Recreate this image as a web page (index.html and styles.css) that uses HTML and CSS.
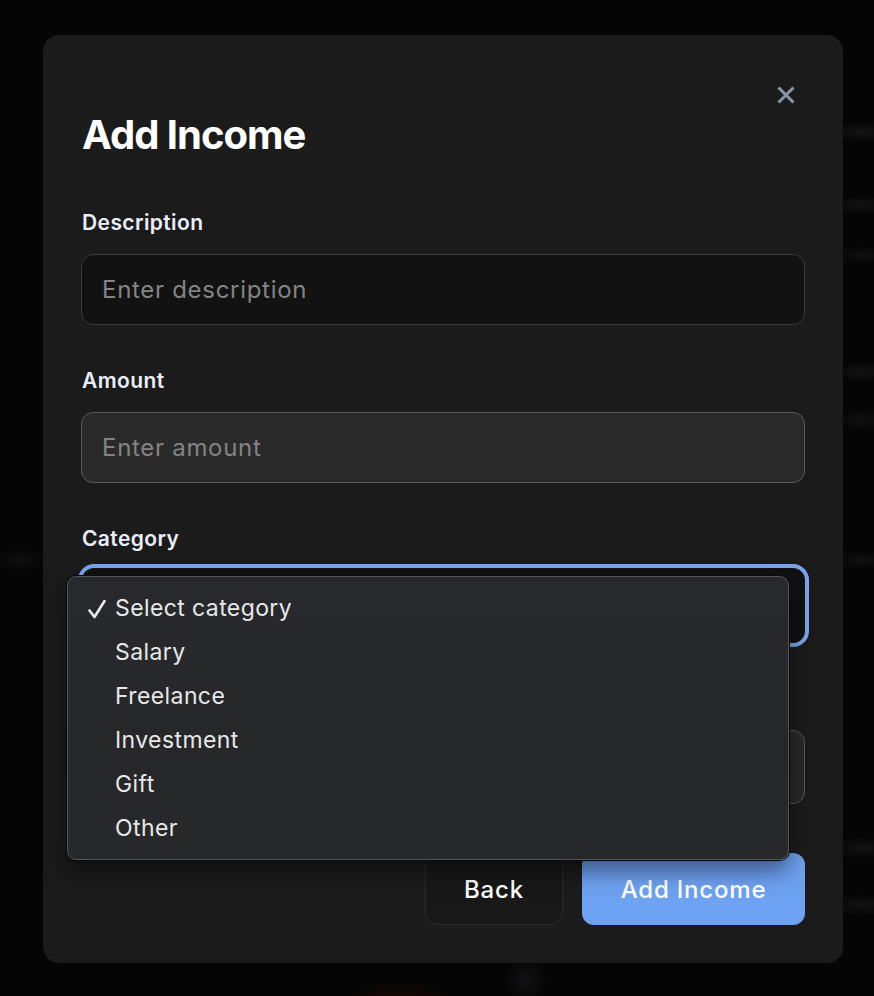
FILE: index.html
```html
<!DOCTYPE html>
<html lang="en">
<head>
<meta charset="utf-8">
<title>Add Income</title>
<link rel="stylesheet" href="styles.css">
</head>
<body>
<div class="modal">
  <div class="modal-top">
    <button class="close-btn" aria-label="Close">
      <svg width="20" height="20" viewBox="0 0 20 20"><path d="M2.5 2.5 L17.5 17.5 M17.5 2.5 L2.5 17.5" stroke="#8b95a7" stroke-width="3" stroke-linecap="butt" fill="none"/></svg>
    </button>
  </div>
  <h1 class="title">Add Income</h1>
  <form class="form">
    <div class="field">
      <label class="label">Description</label>
      <div class="input input-dark"><span class="placeholder">Enter description</span></div>
    </div>
    <div class="field">
      <label class="label">Amount</label>
      <div class="input input-grey"><span class="placeholder">Enter amount</span></div>
    </div>
    <div class="field field-cat">
      <label class="label">Category</label>
      <div class="select-wrap">
        <div class="select">
          <svg class="chev" width="14" height="14" viewBox="0 0 14 14"><path d="M2 5 L7 10 L12 5" stroke="#3a4a6a" stroke-width="1.5" fill="none"/></svg>
        </div>
        <div class="menu">
          <div class="menu-item"><span class="check"><svg width="18" height="20" viewBox="0 0 18 20"><path d="M1.5 11.5 L6.5 18 L16.5 2" stroke="#e8e8e8" stroke-width="2.6" stroke-linecap="round" stroke-linejoin="round" fill="none"/></svg></span>Select category</div>
          <div class="menu-item"><span class="check"></span>Salary</div>
          <div class="menu-item"><span class="check"></span>Freelance</div>
          <div class="menu-item"><span class="check"></span>Investment</div>
          <div class="menu-item"><span class="check"></span>Gift</div>
          <div class="menu-item"><span class="check"></span>Other</div>
        </div>
      </div>
    </div>
    <div class="field field-date">
      <div class="label label-empty"></div>
      <div class="input input-grey input-date"></div>
    </div>
    <div class="actions">
      <button type="button" class="btn btn-back">Back</button>
      <button type="button" class="btn btn-primary">Add Income</button>
    </div>
  </form>
</div>
</body>
</html>
```
FILE: styles.css
```css
* { box-sizing: border-box; }
html, body { margin: 0; padding: 0; }
body {
  width: 874px;
  height: 996px;
  overflow: hidden;
  font-family: Inter, "Noto Sans", sans-serif;
  background:
    radial-gradient(ellipse 34px 10px at 862px 132px, rgba(55,55,55,0.3), transparent),
    radial-gradient(ellipse 34px 10px at 862px 205px, rgba(55,55,55,0.25), transparent),
    radial-gradient(ellipse 34px 10px at 862px 255px, rgba(55,55,55,0.2), transparent),
    radial-gradient(ellipse 34px 10px at 862px 372px, rgba(55,55,55,0.25), transparent),
    radial-gradient(ellipse 34px 10px at 862px 420px, rgba(55,55,55,0.2), transparent),
    radial-gradient(ellipse 34px 10px at 862px 560px, rgba(55,55,55,0.2), transparent),
    radial-gradient(ellipse 34px 12px at 862px 848px, rgba(55,55,55,0.25), transparent),
    radial-gradient(ellipse 34px 12px at 862px 905px, rgba(55,55,55,0.25), transparent),
    radial-gradient(ellipse 34px 12px at 18px 560px, rgba(55,55,55,0.18), transparent),
    radial-gradient(ellipse 50px 14px at 400px 996px, rgba(70,8,8,0.3), transparent),
    radial-gradient(ellipse 22px 22px at 526px 980px, rgba(40,42,48,0.35), transparent),
    #050505;
}

.modal {
  width: 800px;
  height: 928px;
  margin: 35px 0 0 43px;
  background: #1b1b1b;
  border-radius: 16px;
  padding: 40px 38px 38px 38px;
  display: flex;
  flex-direction: column;
}

.modal-top {
  height: 36px;
  display: flex;
  justify-content: flex-end;
  align-items: center;
}
.close-btn {
  width: 36px;
  height: 36px;
  margin-right: 1px;
  margin-top: 4px;
  padding: 0;
  border: 0;
  background: transparent;
  display: flex;
  align-items: center;
  justify-content: center;
}

.title {
  margin: 0;
  padding-left: 1px;
  font-size: 40px;
  line-height: 48px;
  font-weight: 700;
  color: #ffffff;
  letter-spacing: -1px;
}

.form {
  margin-top: 50px;
  display: flex;
  flex-direction: column;
}

.field { display: flex; flex-direction: column; }
.field + .field { margin-top: 42px; }
.field-date { margin-top: 41px !important; }

.label {
  padding-left: 1px;
  font-size: 21px;
  line-height: 28px;
  font-weight: 600;
  color: #e9eef8;
  margin-bottom: 17px;
  letter-spacing: 0.4px;
}
.label-empty { height: 28px; }
.field-cat .label { margin-bottom: 15px; }
.field-date .label { margin-bottom: 18px; }

.input {
  height: 71px;
  border-radius: 12px;
  padding: 0 20px;
  display: flex;
  align-items: center;
}
.input-dark {
  background: #121212;
  border: 1px solid #3b3b3b;
}
.input-grey {
  background: #2a2a2a;
  border: 1px solid #5a5a5a;
}
.input-date { height: 74px; }

.placeholder {
  font-size: 24px;
  color: #848484;
  letter-spacing: 0.7px;
}

.select-wrap { position: relative; }
.select {
  height: 75px;
  margin-left: 1px;
  border-radius: 12px;
  background: #111111;
  border: 1px solid #111;
  outline: 4px solid #79a6ec;
  outline-offset: 0;
  padding: 0 20px;
  display: flex;
  align-items: center;
  justify-content: flex-end;
}
.chev { margin-right: -6px; }

.menu {
  position: absolute;
  left: -14px;
  top: 8px;
  width: 722px;
  padding: 9px 0 9px;
  border-radius: 9px;
  background: linear-gradient(180deg, #27292c 0%, #262729 60%, #27282a 100%);
  border: 1px solid #535457;
  box-shadow: 0 0 0 1px #0a0a0a, 0 10px 24px rgba(0,0,0,0.5);
  z-index: 5;
}
.menu-item {
  height: 44px;
  display: flex;
  align-items: center;
  font-size: 23px;
  color: #e8e8e8;
  padding-left: 20px;
  letter-spacing: 0.4px;
}
.check {
  width: 27px;
  height: 20px;
  display: inline-flex;
  align-items: center;
  margin-top: 2px;
}

.actions {
  margin-top: 49px;
  display: flex;
  justify-content: flex-end;
  gap: 19px;
}
.btn {
  height: 72px;
  border-radius: 12px;
  padding: 0;
  font-family: Inter, "Noto Sans", sans-serif;
  font-size: 24px;
  font-weight: 500;
  letter-spacing: 0.8px;
  color: #ffffff;
}
.btn-back {
  width: 138px;
  background: #181818;
  border: 1px solid #2c2c2c;
}
.btn-primary {
  width: 223px;
  background: #6ea2f2;
  border: 0;
}
```
